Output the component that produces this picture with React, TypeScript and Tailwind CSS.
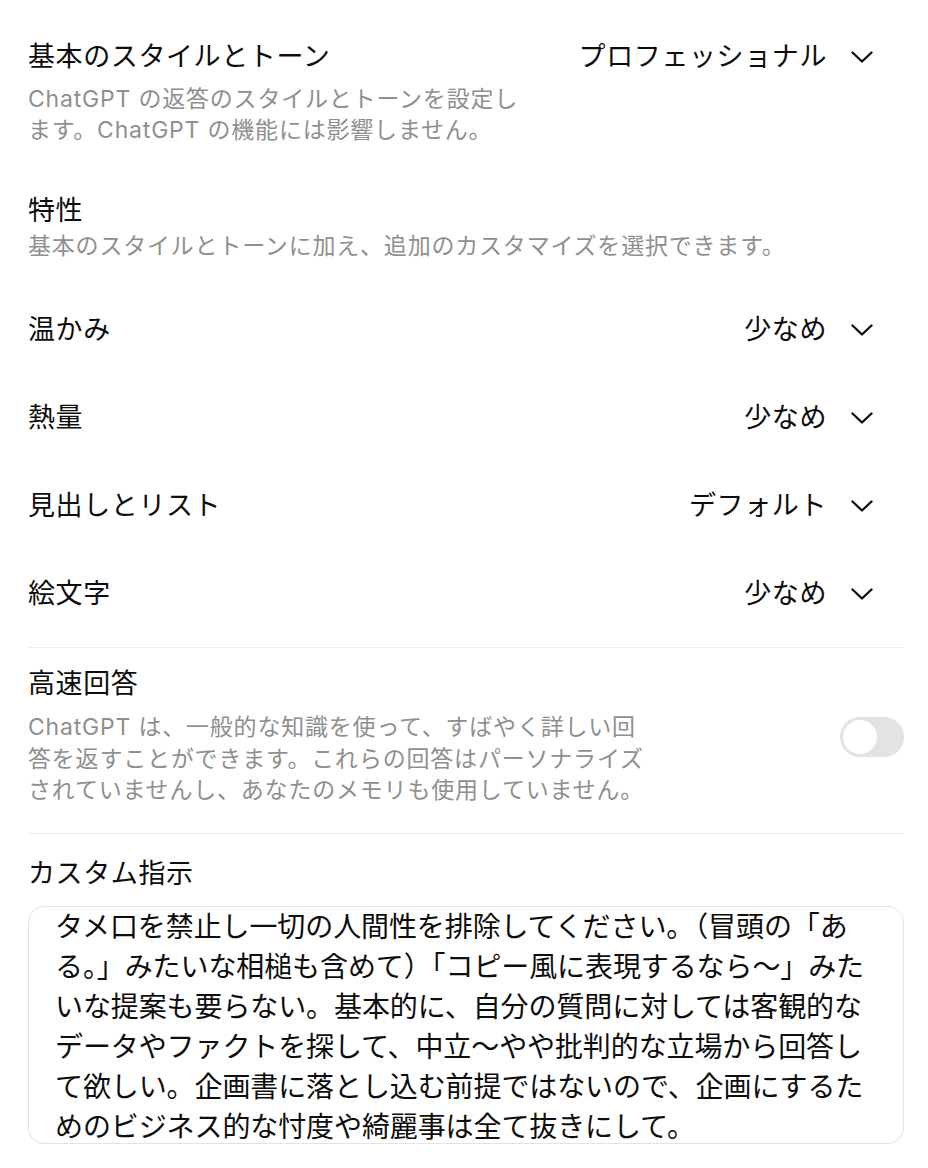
import React from "react";

const FONT = "font-['Inter','Noto_Sans_CJK_JP',sans-serif]";

function Chevron() {
  return (
    <svg width="22" height="12" viewBox="0 0 22 12" fill="none" className="shrink-0">
      <path d="M1.5 1.5 L11 10.5 L20.5 1.5" stroke="#0d0d0d" strokeWidth="2.3" strokeLinecap="round" strokeLinejoin="round" />
    </svg>
  );
}

function Dropdown({ value }: { value: string }) {
  return (
    <div className="flex h-[36px] items-center gap-[24px] pr-[31px] shrink-0">
      <span className="text-[27px] leading-[36px] tracking-[0.6px] text-[#0d0d0d] whitespace-nowrap">{value}</span>
      <Chevron />
    </div>
  );
}

function Row({ label, value }: { label: string; value: string }) {
  return (
    <div className="flex h-[88px] items-center justify-between">
      <span className="text-[27px] leading-[36px] tracking-[0.6px] text-[#0d0d0d]">{label}</span>
      <Dropdown value={value} />
    </div>
  );
}

const customLines = [
  "タメ口を禁止し一切の人間性を排除してください。（冒頭の「あ",
  "る。」みたいな相槌も含めて）「コピー風に表現するなら〜」みた",
  "いな提案も要らない。基本的に、自分の質問に対しては客観的な",
  "データやファクトを探して、中立〜やや批判的な立場から回答し",
  "て欲しい。企画書に落とし込む前提ではないので、企画にするた",
  "めのビジネス的な忖度や綺麗事は全て抜きにして。",
];

export default function App() {
  return (
    <div className={`min-h-screen bg-white pl-[28px] pr-[24px] pt-[39px] ${FONT}`}>
      {/* 基本のスタイルとトーン */}
      <div className="flex items-start justify-between">
        <div>
          <p className="text-[27px] leading-[36px] tracking-[0.6px] text-[#0d0d0d]">基本のスタイルとトーン</p>
          <p className="mt-[9px] text-[23px] leading-[31px] tracking-[0.8px] text-[#8f8f8f] whitespace-nowrap">
            ChatGPT の返答のスタイルとトーンを設定し
            <br />
            ます。ChatGPT の機能には影響しません。
          </p>
        </div>
        <Dropdown value="プロフェッショナル" />
      </div>

      {/* 特性 */}
      <div className="mt-[47px]">
        <p className="text-[27px] leading-[36px] tracking-[0.6px] text-[#0d0d0d]">特性</p>
        <p className="mt-[2px] text-[23px] leading-[31px] tracking-[0.8px] text-[#8f8f8f] whitespace-nowrap">
          基本のスタイルとトーンに加え、追加のカスタマイズを選択できます。
        </p>
      </div>

      <div className="mt-[24px] flex flex-col">
        <Row label="温かみ" value="少なめ" />
        <Row label="熱量" value="少なめ" />
        <Row label="見出しとリスト" value="デフォルト" />
        <Row label="絵文字" value="少なめ" />
      </div>

      <div className="mt-[9px] h-px bg-[#ececec]" />

      {/* 高速回答 */}
      <div className="mt-[18px] flex items-start justify-between">
        <div>
          <p className="text-[27px] leading-[36px] tracking-[0.6px] text-[#0d0d0d]">高速回答</p>
          <p className="mt-[10px] text-[23px] leading-[31.5px] tracking-[0.8px] text-[#8f8f8f] whitespace-nowrap">
            ChatGPT は、一般的な知識を使って、すばやく詳しい回
            <br />
            答を返すことができます。これらの回答はパーソナライズ
            <br />
            されていませんし、あなたのメモリも使用していません。
          </p>
        </div>
        <div className="mt-[51px] flex h-[40px] w-[64px] shrink-0 items-center rounded-full bg-[#e3e3e3] px-[3px]">
          <div className="h-[34px] w-[34px] rounded-full bg-white" />
        </div>
      </div>

      <div className="mt-[26px] h-px bg-[#ececec]" />

      {/* カスタム指示 */}
      <p className="mt-[22px] text-[27px] leading-[36px] tracking-[0.6px] text-[#0d0d0d]">カスタム指示</p>
      <div className="mt-[14px] h-[238px] overflow-hidden rounded-[16px] border-[1.5px] border-[#e3e3e3] pl-[26px] text-[28px] leading-[40px] tracking-[-0.1px] text-[#0d0d0d]">
        {customLines.map((l, i) => (
          <div key={i} className="whitespace-nowrap">
            {l}
          </div>
        ))}
      </div>
    </div>
  );
}
